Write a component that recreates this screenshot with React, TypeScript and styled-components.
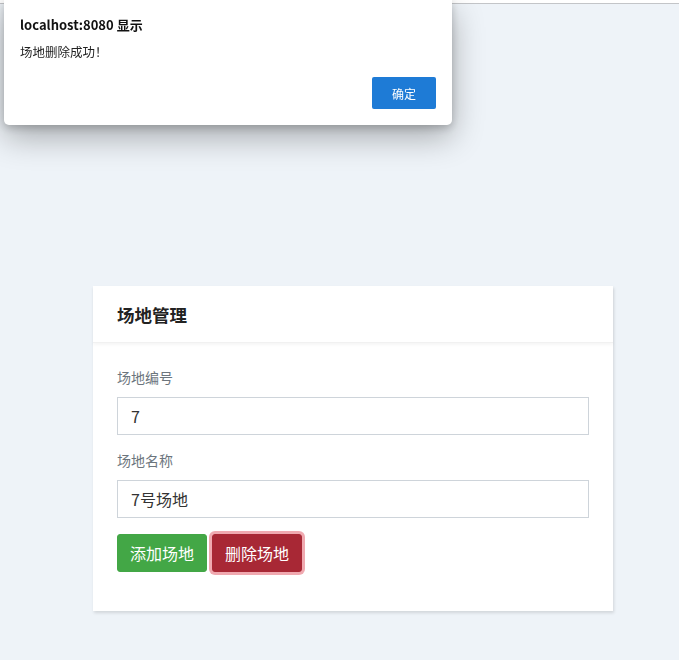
import React from "react";
import styled, { createGlobalStyle } from "styled-components";

const GlobalStyle = createGlobalStyle`
  html, body {
    margin: 0;
    padding: 0;
    background: #eef3f8;
    font-family: "Noto Sans CJK SC", "Noto Sans", sans-serif;
  }
  * { box-sizing: border-box; }
`;

const TopEdge = styled.div`
  height: 4px;
  background: #ffffff;
  border-bottom: 1px solid #c3c5c8;
`;

const Page = styled.div`
  padding: 282px 0 40px 93px;
`;

const Card = styled.div`
  width: 520px;
  background: #ffffff;
  box-shadow: 1px 2px 3px rgba(0, 0, 0, 0.12);
`;

const CardHeader = styled.div`
  height: 57px;
  padding: 0 24px;
  display: flex;
  align-items: center;
  border-bottom: 1px solid #f1f1f1;
  box-shadow: 0 2px 3px rgba(0, 0, 0, 0.04);
`;

const Title = styled.h5`
  margin: 0;
  font-size: 17.5px;
  font-weight: 700;
  color: #222;
`;

const CardBody = styled.div`
  padding: 24px 24px 23px;
`;

const FormGroup = styled.div`
  margin-bottom: 15px;
`;

const Label = styled.label`
  display: block;
  font-size: 14px;
  line-height: 21px;
  color: #6c757d;
  margin-bottom: 9px;
`;

const Input = styled.input`
  display: block;
  width: 472px;
  height: 38px;
  padding: 0 13px;
  border: 1px solid #ced4da;
  border-radius: 0;
  font-family: "Noto Sans CJK SC", "Noto Sans", sans-serif;
  font-size: 16px;
  color: #333;
  background: #fff;
  outline: none;
`;

const ButtonRow = styled.div`
  display: flex;
  gap: 5px;
  margin-top: 16px;
  margin-bottom: 16px;
`;

const Button = styled.button<{ $variant: "success" | "danger"; $focused?: boolean }>`
  height: 38px;
  width: 90px;
  padding: 0 12px;
  border: 1px solid ${(p) => (p.$variant === "success" ? "#43a746" : "#a82835")};
  border-radius: 3px;
  background: ${(p) => (p.$variant === "success" ? "#43a746" : "#a82835")};
  color: #fff;
  font-family: "Noto Sans CJK SC", "Noto Sans", sans-serif;
  font-size: 16px;
  line-height: 1;
  cursor: pointer;
  box-shadow: ${(p) => (p.$focused ? "0 0 0 3px rgba(225, 83, 97, 0.5)" : "none")};
`;

const Dialog = styled.div`
  position: fixed;
  top: 0;
  left: 4px;
  width: 448px;
  height: 125px;
  background: #ffffff;
  border-radius: 0 0 5px 5px;
  box-shadow: 0 12px 32px rgba(0, 0, 0, 0.3), 0 3px 8px rgba(0, 0, 0, 0.2);
  padding: 16px;
  display: flex;
  flex-direction: column;
  font-family: "Noto Sans CJK SC", "Noto Sans", sans-serif;
`;

const DialogTitle = styled.div`
  font-size: 13px;
  font-weight: 700;
  color: #111;
  line-height: 18px;
`;

const DialogMessage = styled.div`
  margin-top: 9px;
  font-size: 12.5px;
  color: #222;
  line-height: 18px;
`;

const DialogFooter = styled.div`
  margin-top: auto;
  display: flex;
  justify-content: flex-end;
`;

const OkButton = styled.button`
  width: 64px;
  height: 32px;
  border: none;
  border-radius: 2px;
  background: #1e7bd6;
  color: #fff;
  font-family: "Noto Sans CJK SC", "Noto Sans", sans-serif;
  font-size: 12px;
  cursor: pointer;
`;

export default function App() {
  return (
    <>
      <GlobalStyle />
      <TopEdge />
      <Page>
        <Card>
          <CardHeader>
            <Title>场地管理</Title>
          </CardHeader>
          <CardBody>
            <FormGroup>
              <Label>场地编号</Label>
              <Input defaultValue="7" />
            </FormGroup>
            <FormGroup>
              <Label>场地名称</Label>
              <Input defaultValue="7号场地" />
            </FormGroup>
            <ButtonRow>
              <Button $variant="success">添加场地</Button>
              <Button $variant="danger" $focused>
                删除场地
              </Button>
            </ButtonRow>
          </CardBody>
        </Card>
      </Page>
      <Dialog>
        <DialogTitle>localhost:8080 显示</DialogTitle>
        <DialogMessage>场地删除成功！</DialogMessage>
        <DialogFooter>
          <OkButton>确定</OkButton>
        </DialogFooter>
      </Dialog>
    </>
  );
}
